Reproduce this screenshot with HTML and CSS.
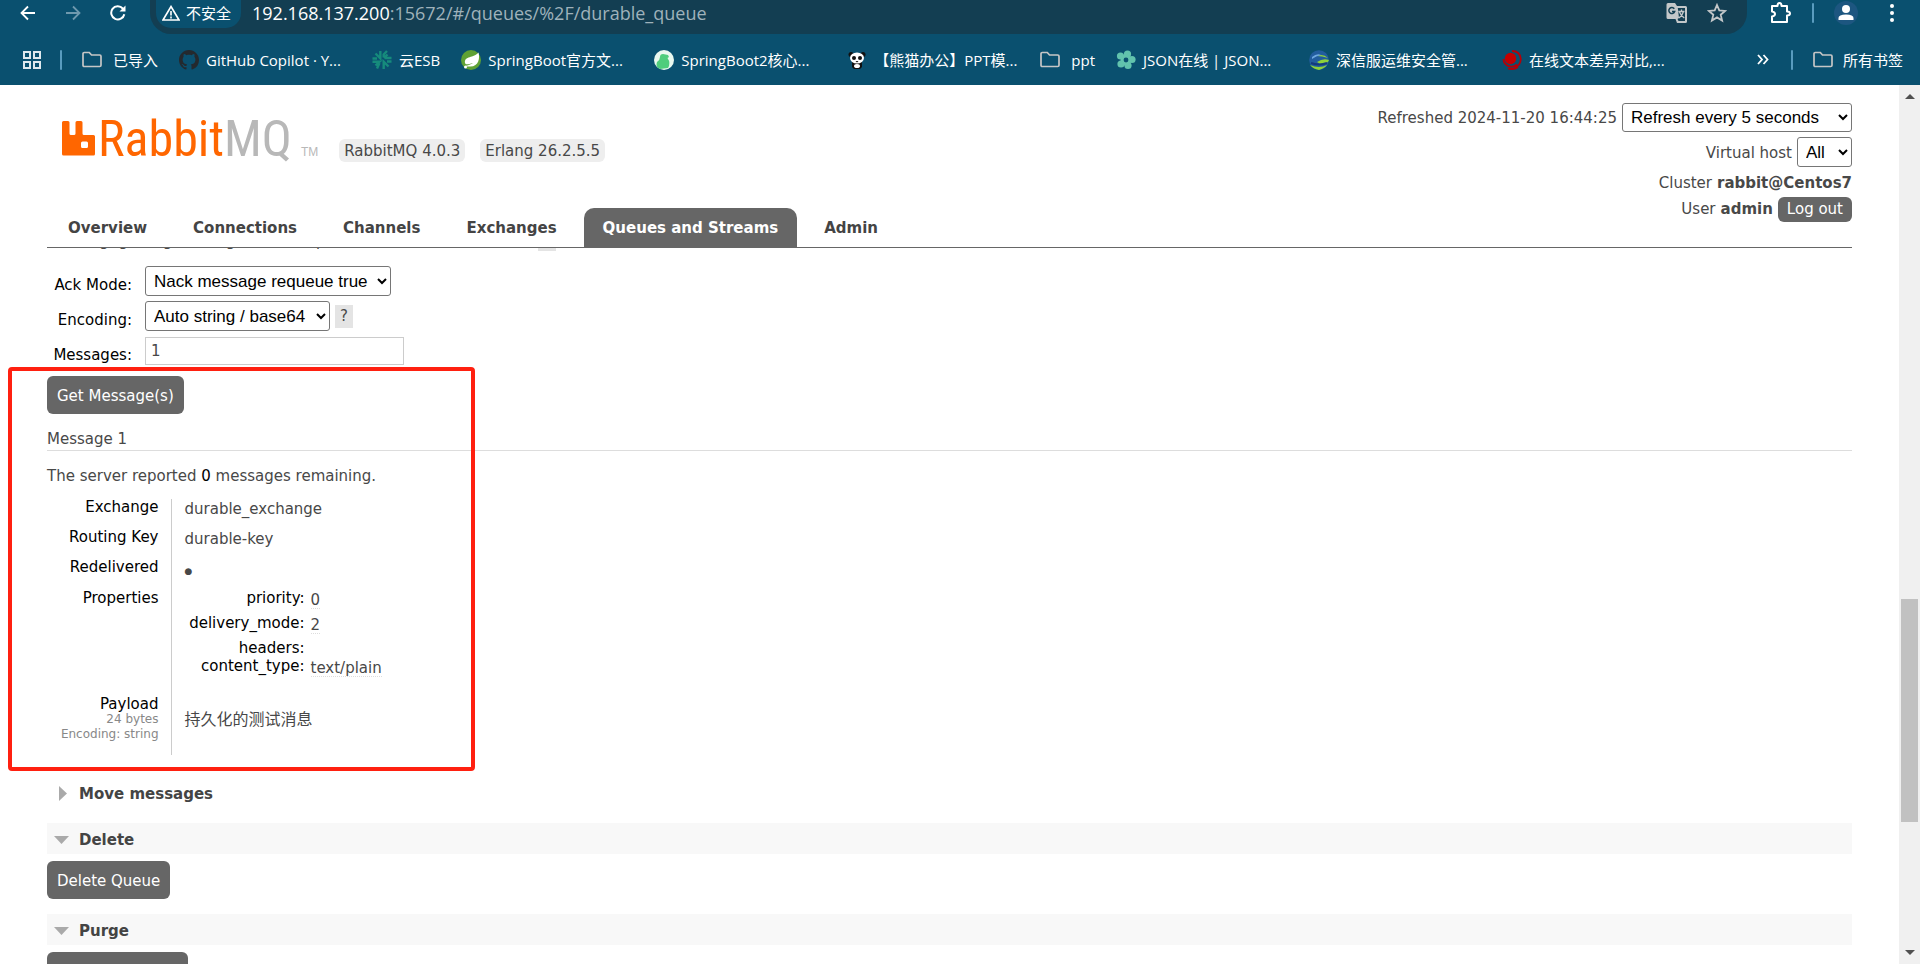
FILE: index.html
```html
<!DOCTYPE html>
<html lang="en">
<head>
<meta charset="utf-8">
<title>RabbitMQ Management</title>
<link rel="stylesheet" href="styles.css">
</head>
<body>
<svg class="defs" aria-hidden="true">
  <symbol id="folder" viewBox="0 0 20 20"><path d="M1 15.2V3.8Q1 2.500 2.300 2.500H7.300L9.500 5H17.700Q19 5 19 6.300V15.200Q19 16.500 17.700 16.500H2.300Q1 16.500 1 15.200Z" fill="none" stroke="#c6c6c6" stroke-width="1.700"/></symbol>
</svg>
<header class="browser">
  <div class="toolbar">
    <nav class="history" aria-label="History">
      <button class="tool" aria-label="Back"><svg width="16" height="16" viewBox="0 0 16 16"><path d="M15 8H2M8 1.500L1.500 8L8 14.500" fill="none" stroke="#fff" stroke-width="1.800"/></svg></button>
      <button class="tool" aria-label="Forward"><svg width="16" height="16" viewBox="0 0 16 16"><path d="M1 8H14M8 1.500L14.500 8L8 14.500" fill="none" stroke="#6f99ae" stroke-width="1.800"/></svg></button>
      <button class="tool" aria-label="Reload"><svg width="16" height="16" viewBox="0 0 16 16"><path d="M14.300 9.200A6.600 6.600 0 1 1 12.800 3.500L14.200 5" fill="none" stroke="#fff" stroke-width="2"/><path d="M15.500 .5V6.500H9.500Z" fill="#fff"/></svg></button>
    </nav>
    <div class="omnibox">
      <button class="chip"><svg width="18" height="16" viewBox="0 0 18 16"><path d="M9 1.500L17 15H1Z" fill="none" stroke="#fff" stroke-width="1.600"/><path d="M9 6V10.500M9 11.500V13.500" stroke="#fff" stroke-width="1.600"/></svg>不安全</button>
      <p class="url"><span class="host">192.168.137.200</span>:15672/#/queues/%2F/durable_queue</p>
      <button class="tool" aria-label="Translate"><svg width="22" height="22" viewBox="0 0 22 22"><path d="M2 1H9L11 4H19.500Q21 4 21 5.500V19.500Q21 21 19.500 21H11L9.500 17H2Q.500 17 .500 15.500V2.500Q.500 1 2 1Z" fill="#c3c7c9"/><path d="M11.800 6H19V19H12.500L11.500 17L13 16Z" fill="#133e52"/><path d="M8.300 6.800A3 3 0 1 0 8.700 9.500H6" fill="none" stroke="#133e52" stroke-width="1.500"/><path d="M12.300 9.500H18.500M15.500 7.500V9.500M17.500 9.500Q16.500 13.500 12.800 16M13.500 10Q15 14 18.300 16" fill="none" stroke="#c3c7c9" stroke-width="1.300"/></svg></button>
      <button class="tool" aria-label="Bookmark this page"><svg width="20" height="20" viewBox="0 0 20 20"><path d="M10 2L12.300 7.400L18.200 7.900L13.700 11.700L15.100 17.500L10 14.400L4.900 17.500L6.300 11.700L1.800 7.900L7.700 7.400Z" fill="none" stroke="#c3c7c9" stroke-width="1.800"/></svg></button>
    </div>
    <div class="actions">
      <button class="tool" aria-label="Extensions"><svg width="22" height="22" viewBox="0 0 22 22"><path d="M2 4H7.500Q7.500 1 9.500 1T11.500 4H17V9.500Q20 9.500 20 11.500T17 13.500V20H2V14.500Q5 14 5 12T2 9.500Z" fill="none" stroke="#fff" stroke-width="2" stroke-linejoin="round"/></svg></button>
      <span class="divider"></span>
      <button class="tool" aria-label="Profile"><svg width="24" height="24" viewBox="0 0 24 24"><circle cx="12" cy="12" r="12" fill="#1d5680"/><circle cx="12" cy="8" r="4" fill="#fff"/><path d="M4.500 19V17Q4.500 13.500 12 13.500T19.500 17V19Z" fill="#fff"/></svg></button>
      <button class="tool menu" aria-label="Menu"><svg width="4" height="18" viewBox="0 0 4 18"><g fill="#fff"><circle cx="2" cy="2" r="2"/><circle cx="2" cy="9" r="2"/><circle cx="2" cy="16" r="2"/></g></svg></button>
    </div>
  </div>
  <nav class="bookmarks" aria-label="Bookmarks">
    <button class="tool" aria-label="Apps"><svg width="18" height="18" viewBox="0 0 18 18"><path d="M1 1H7V7H1ZM11 1H17V7H11ZM1 11H7V17H1ZM11 11H17V17H11Z" fill="none" stroke="#dfe9ee" stroke-width="2"/></svg></button>
    <span class="divider"></span>
    <a class="mark folder" href="#"><svg class="ico"><use href="#folder"/></svg>已导入</a>
    <a class="mark wide" href="#"><svg class="ico" viewBox="0 0 16 16"><path fill="#24292e" d="M8 0C3.580 0 0 3.580 0 8c0 3.540 2.290 6.530 5.470 7.590.4.070.55-.17.55-.38 0-.19-.01-.82-.01-1.490-2.010.37-2.530-.49-2.690-.94-.09-.23-.48-.94-.82-1.130-.28-.15-.68-.52-.01-.53.63-.01 1.080.58 1.230.82.72 1.210 1.870.87 2.330.66.07-.52.28-.87.51-1.070-1.780-.2-3.640-.89-3.640-3.950 0-.87.31-1.590.82-2.150-.08-.2-.36-1.020.08-2.120 0 0 .67-.21 2.200.82.64-.18 1.320-.27 2-.27s1.360.09 2 .27c1.530-1.040 2.200-.82 2.200-.82.44 1.100.16 1.920.08 2.120.51.56.82 1.270.82 2.150 0 3.070-1.870 3.750-3.650 3.950.29.25.54.73.54 1.480 0 1.070-.01 1.930-.01 2.200 0 .21.15.46.55.38A8.010 8.010 0 0 0 16 8c0-4.420-3.580-8-8-8z"/></svg>GitHub Copilot · Y...</a>
    <a class="mark" href="#"><svg class="ico" viewBox="0 0 20 20"><g fill="none" stroke="#168b7c" stroke-width="2.400"><path d="M8.300 1V8.300L3.500 3.500M.500 8.500H5"/><path d="M11.700 7.500V4.500L15 1M12.500 8H19.500M15.500 4.500L12 8"/><path d="M.500 11.700H7.500L3.500 15.500M7.500 13L5 18.500"/><path d="M11.700 19V11.700L16.500 16.500M15 11.500H19.500"/></g></svg>云ESB</a>
    <a class="mark wide" href="#"><svg class="ico" viewBox="0 0 20 20"><circle cx="10" cy="10" r="10" fill="#5fa134"/><path d="M17.500 2.500C19 8 18 17 8.500 16.500H4C5 15.500 9 15 12 13C7 14.500 4.500 15 4 13C3 5.500 13 8.500 17.500 2.500Z" fill="#fff"/><circle cx="4.500" cy="17" r="1.500" fill="#fff"/></svg>SpringBoot官方文...</a>
    <a class="mark wide" href="#"><svg class="ico" viewBox="0 0 20 20"><circle cx="10" cy="10" r="10" fill="#e9f8ef"/><path d="M6 7Q6 4 9 4L14 5L15 7L13.500 8Q17 13 14 18L6 19Q1 17 3 12Q6 10 6 7Z" fill="#4fcd7c"/></svg>SpringBoot2核心...</a>
    <a class="mark wide" href="#"><svg class="ico" viewBox="0 0 20 20"><circle cx="4" cy="4.500" r="2.500" fill="#111"/><circle cx="16" cy="4.500" r="2.500" fill="#111"/><path d="M5 12H15V17L13 19H7L5 17Z" fill="#111"/><ellipse cx="10" cy="8" rx="7" ry="5.500" fill="#fff"/><ellipse cx="7" cy="8" rx="2" ry="2" fill="#111"/><ellipse cx="13" cy="8" rx="2" ry="2" fill="#111"/><path d="M8.500 11H11.500L10 12.500Z" fill="#111"/><ellipse cx="10" cy="16" rx="3" ry="2" fill="#fff"/></svg>【熊猫办公】PPT模...</a>
    <a class="mark folder" href="#"><svg class="ico"><use href="#folder"/></svg>ppt</a>
    <a class="mark wide" href="#"><svg class="ico" viewBox="0 0 20 20"><g fill="#62c3ad"><circle cx="11.500" cy="4" r="3.600"/><circle cx="16" cy="9.500" r="3.600"/><circle cx="12" cy="15.500" r="3.600"/><circle cx="5" cy="14" r="3.600"/><circle cx="4.500" cy="6" r="3.600"/><circle cx="10" cy="10" r="5.500"/></g><circle cx="10" cy="10" r="2.400" fill="#0a506f"/></svg>JSON在线 | JSON...</a>
    <a class="mark wide" href="#"><svg class="ico" viewBox="0 0 20 20"><circle cx="10" cy="10" r="9.800" fill="#225d9e"/><path d="M8 6Q14 3 19 8Q13 6 8 6ZM8 12Q14 8 20 10Q19 14 11 14ZM1 15Q10 19 18 15Q16 18 10 20Q4 19 1 15Z" fill="#8ed13a"/><path d="M3 7Q8 3 12 5Q7 6 3 9Z" fill="#6fa8e0"/><path d="M2 13Q10 16 18 13" fill="none" stroke="#143a7c" stroke-width="2"/></svg>深信服运维安全管...</a>
    <a class="mark wide" href="#"><svg class="ico" viewBox="0 0 20 20"><circle cx="8.500" cy="8.500" r="5.700" fill="#c40000"/><path d="M10 1Q18 1 18.800 9Q18.500 15 13 17.500M1.500 9Q1.500 15 8 16.500Q12 17 15 14.500M6 18.500Q12 20 16 17" fill="none" stroke="#b50008" stroke-width="1.800"/></svg>在线文本差异对比,...</a>
    <button class="tool more" aria-label="More bookmarks"><svg width="12" height="11" viewBox="0 0 12 11"><path d="M1 1L5 5.500L1 10M6.500 1L10.500 5.500L6.500 10" fill="none" stroke="#fff" stroke-width="1.800"/></svg></button>
    <span class="divider"></span>
    <a class="mark folder last" href="#"><svg class="ico"><use href="#folder"/></svg>所有书签</a>
  </nav>
</header>

<div class="viewport">
  <div class="page">
    <header class="masthead">
      <div class="brand">
        <a class="logo" href="#"><svg width="34" height="35" viewBox="0 0 34 35"><path fill="#f60" fill-rule="evenodd" d="M1.500 0H6Q7.500 0 7.500 1.500V12.500Q7.500 14 9 14H12Q13.500 14 13.500 12.500V1.500Q13.500 0 15 0H19Q20.500 0 20.500 1.500V12.500Q20.500 14 22 14H31.500Q33 14 33 15.500V33Q33 34.500 31.500 34.500H1.500Q0 34.500 0 33V1.500Q0 0 1.500 0ZM20.500 20.500Q19 20.500 19 22V25.500Q19 27 20.500 27H24.500Q26 27 26 25.500V22Q26 20.500 24.500 20.500Z"/></svg><span class="word">Rabbit<span class="mq">MQ</span></span><span class="tm">TM</span></a>
        <span class="version">RabbitMQ 4.0.3</span>
        <span class="version">Erlang 26.2.5.5</span>
      </div>
      <div class="status">
        <div class="line"><label for="refresh">Refreshed 2024-11-20 16:44:25</label><select id="refresh" class="select refresh"><option>Refresh every 5 seconds</option></select></div>
        <div class="line"><label for="vhost">Virtual host</label><select id="vhost" class="select vhost"><option>All</option></select></div>
        <div class="line text">Cluster <b>rabbit@Centos7</b></div>
        <div class="line text">User <b>admin</b> <button class="logout">Log out</button></div>
      </div>
    </header>
    <nav class="tabs" aria-label="Main">
      <a href="#">Overview</a>
      <a href="#">Connections</a>
      <a href="#">Channels</a>
      <a href="#">Exchanges</a>
      <a class="active" href="#">Queues and Streams</a>
      <a href="#">Admin</a>
    </nav>
    <main class="content">
      <div class="scrolled"><p>Warning: getting messages from a queue is a destructive action. <span class="help">?</span></p></div>
      <form class="get">
        <label for="ack">Ack Mode:</label>
        <div class="field"><select id="ack" class="select ack"><option>Nack message requeue true</option></select></div>
        <label for="enc">Encoding:</label>
        <div class="field"><select id="enc" class="select enc"><option>Auto string / base64</option></select><span class="help">?</span></div>
        <label for="count">Messages:</label>
        <div class="field"><input id="count" class="count" type="text" value="1"></div>
      </form>
      <section class="result">
        <button class="action">Get Message(s)</button>
        <h3>Message 1</h3>
        <p>The server reported <b>0</b> messages remaining.</p>
        <table class="facts">
          <tr><th scope="row">Exchange</th><td>durable_exchange</td></tr>
          <tr><th scope="row">Routing Key</th><td>durable-key</td></tr>
          <tr><th scope="row">Redelivered</th><td><span class="dot">●</span></td></tr>
          <tr class="props"><th scope="row">Properties</th><td>
            <table class="inner">
              <tr><th scope="row">priority:</th><td><abbr>0</abbr></td></tr>
              <tr><th scope="row">delivery_mode:</th><td><abbr>2</abbr></td></tr>
              <tr class="tight"><th scope="row">headers:</th><td></td></tr>
              <tr><th scope="row">content_type:</th><td><abbr>text/plain</abbr></td></tr>
            </table>
          </td></tr>
          <tr class="payload"><th scope="row">Payload<small>24 bytes</small><small>Encoding: string</small></th><td><pre>持久化的测试消息</pre></td></tr>
        </table>
        <div class="highlight"></div>
      </section>
      <section class="panel move">
        <h2><button class="toggle"><svg width="16" height="16" viewBox="0 0 16 16"><path d="M5 0L13 7.500L5 15Z" fill="#aaa"/></svg>Move messages</button></h2>
      </section>
      <section class="panel">
        <h2 class="open"><button class="toggle"><svg width="16" height="16" viewBox="0 0 16 16"><path d="M0 4H15L7.500 12Z" fill="#aaa"/></svg>Delete</button></h2>
        <button class="action">Delete Queue</button>
      </section>
      <section class="panel">
        <h2 class="open"><button class="toggle"><svg width="16" height="16" viewBox="0 0 16 16"><path d="M0 4H15L7.500 12Z" fill="#aaa"/></svg>Purge</button></h2>
        <button class="action">Purge Messages</button>
      </section>
    </main>
  </div>
  <div class="scrollbar" aria-hidden="true">
    <svg width="10" height="5" viewBox="0 0 10 5"><path d="M0 5L5 0L10 5Z" fill="#505050"/></svg>
    <div class="track"><div class="thumb"></div></div>
    <svg width="10" height="5" viewBox="0 0 10 5"><path d="M0 0L5 5L10 0Z" fill="#505050"/></svg>
  </div>
</div>
</body>
</html>
```
FILE: styles.css
```css
* { box-sizing: border-box; }

body {
  margin: 0;
  height: 100vh;
  display: flex;
  flex-direction: column;
  overflow: hidden;
  background: #fff;
  color: #484848;
  font: 15px/23px Verdana, "DejaVu Sans", "Noto Sans CJK SC", sans-serif;
}

p, h2, h3, pre { margin: 0; font: inherit; }
button { font: inherit; border: 0; cursor: pointer; }
a { color: inherit; text-decoration: none; }
.defs { display: none; }

/* Browser chrome */
.browser {
  flex: none;
  background: #0a506f;
  color: #fff;
  font: 15px/20px "Open Sans", "Noto Sans CJK SC", sans-serif;
}
.toolbar { display: flex; height: 34px; }
.tool { display: flex; flex: none; padding: 0; background: none; }
.history { display: flex; align-items: center; gap: 29px; width: 150px; padding: 0 0 8px 20px; }
.omnibox {
  flex: 1;
  display: flex;
  align-items: center;
  gap: 19px;
  padding: 0 20px 8px 6px;
  background: #133e52;
  border-radius: 0 0 21px 21px;
}
.chip {
  display: flex;
  align-items: center;
  gap: 6px;
  height: 28px;
  margin: 2px 0 0;
  padding: 0 10px 2px 6px;
  border-radius: 0 0 15px 15px;
  background: #0a506f;
  color: #fff;
  white-space: nowrap;
}
.url { flex: 1; margin-left: -8px; font-size: 18px; color: #9fb2bb; white-space: nowrap; }
.host { color: #fff; }
.actions { display: flex; align-items: center; gap: 20px; width: 173px; padding: 0 26px 8px 23px; }
.menu { margin-left: auto; }
.divider { flex: none; width: 2px; height: 20px; border-radius: 1px; background: #5a9cbf; }

.bookmarks { display: flex; align-items: center; height: 51px; padding: 0 17px 0 23px; }
.bookmarks .divider { margin: 0 20px 0 19px; }
.mark { display: flex; align-items: center; flex: none; gap: 7px; padding-right: 21px; white-space: nowrap; }
.mark.folder { gap: 11px; }
.mark.wide { width: 193px; padding-right: 0; }
.mark.last { gap: 10px; padding-right: 0; }
.ico { flex: none; width: 20px; height: 20px; }
.more { margin: 0 3px 0 auto; }

/* Page frame */
.viewport { flex: 1; min-height: 0; display: flex; }
.page { flex: 1; min-width: 0; display: flex; flex-direction: column; padding: 0 47px; }
.scrollbar {
  flex: none;
  width: 21px;
  display: flex;
  flex-direction: column;
  align-items: center;
  gap: 9px;
  padding: 9px 0;
  background: #f0f0f0;
}
.track { flex: 1; display: grid; grid-template-rows: 491fr 223fr 119fr; width: 17px; }
.thumb { grid-row: 2; background: #c1c1c1; }

/* Masthead */
.masthead { display: flex; justify-content: space-between; height: 123px; }
.brand { display: flex; align-items: flex-start; gap: 15px; padding: 36px 0 0 15px; }
.logo { display: flex; align-items: flex-start; height: 41px; margin-right: 6px; }
.word { margin-left: 2px; font: 50px/36px "Roboto Condensed", Roboto, sans-serif; color: #f60; }
.mq { color: #b8b8b8; }
.tm { margin-left: 9px; padding-top: 25px; font: 12px/12px "Liberation Sans", sans-serif; color: #b8b8b8; }
.version { margin-top: 18px; padding: 2px 5px 0; border-radius: 6px; background: #eee; line-height: 21px; white-space: nowrap; }
.status { display: flex; flex-direction: column; align-items: flex-end; padding-top: 18px; white-space: nowrap; }
.line { display: flex; align-items: center; gap: 5px; margin-bottom: 5px; }
.line label { padding-top: 2px; }
.line.text { margin-bottom: 2px; }
.logout { height: 25px; padding: 0 9px; border-radius: 6px; background: #666; color: #fff; }
.select {
  height: 30px;
  padding: 0 4px;
  border: 1px solid #767676;
  border-radius: 3px;
  background: #fff;
  color: #000;
  font: 17px "Liberation Sans", Arial, sans-serif;
}
.refresh { width: 230px; height: 29px; }
.vhost { width: 55px; }
.ack { width: 246px; }
.enc { width: 185px; }

.tabs { display: flex; flex: none; gap: 8px; padding-left: 2px; border-bottom: 1px solid #666; }
.tabs a { padding: 9px 19px 7px; border-radius: 10px 10px 0 0; font-weight: bold; color: #444; white-space: nowrap; }
.tabs .active { background: #666; color: #fff; }

/* Content */
.content { flex: 1; min-height: 0; overflow: hidden; margin: 0 -39px; padding: 0 39px; }
.scrolled { display: flex; align-items: flex-end; height: 3px; overflow: hidden; line-height: 19px; }
.help { display: inline-block; width: 18px; background: #e4e4e4; text-align: center; }
.get { display: grid; grid-template-columns: 85px 1fr; gap: 5px 13px; margin-top: 15px; }
.get label { padding-top: 9px; line-height: 21px; text-align: right; color: #000; }
.field { display: flex; align-items: center; gap: 5px; }
.count { width: 259px; height: 28px; padding: 0 5px; border: 1px solid #ccc; font: inherit; color: inherit; }

.action { display: block; height: 38px; padding: 2px 10px 0; border-radius: 6px; background: #666; color: #fff; }
.result { position: relative; margin-top: 10px; }
.result h3 { margin-top: 15px; border-bottom: 1px solid #ddd; line-height: 21px; }
.result p { margin: 14px 0 11px; }
.result p b { font-weight: normal; color: #000; }
.highlight { position: absolute; top: -9px; bottom: -16px; left: -39px; width: 467px; border: 4px solid #ff2010; border-radius: 4px; pointer-events: none; }

table { border-collapse: collapse; line-height: 16px; }
th, td { padding: 0; vertical-align: top; text-align: left; font-weight: normal; }
th { color: #000; text-align: right; white-space: nowrap; }
.facts > tbody > tr { height: 30px; }
.facts > tbody > tr > th { width: 124px; padding-right: 12px; }
.facts > tbody > tr > td { padding: 2px 0 0 13px; border-left: 1px solid #ccc; }
.facts > tbody > .props { height: 107px; }
.facts > tbody > .props > th,
.facts > tbody > .props > td { padding-top: 1px; }
.facts > tbody > .payload { height: 59px; }
.facts > tbody > .payload > td { padding-top: 16px; }
.inner th { width: 120px; }
.inner td { padding: 2px 0 0 6px; }
.inner tr { height: 25px; }
.inner .tight { height: 18px; }
abbr { display: inline-block; border-bottom: 1px dotted #ddd; }
.dot { font-size: 9px; }
small { display: block; font-size: 12px; line-height: 15px; color: #888; }
pre { font-size: 16px; }

.panel { margin-top: 15px; }
.panel.move { margin-top: 22px; }
.panel .action { margin-top: 7px; }
.open { background: #f8f8f8; }
.toggle {
  display: flex;
  align-items: flex-end;
  gap: 9px;
  width: 100%;
  height: 31px;
  padding: 0 7px 2px;
  background: none;
  color: #444;
  font-weight: bold;
}
.toggle svg { margin-bottom: 4px; }
```
